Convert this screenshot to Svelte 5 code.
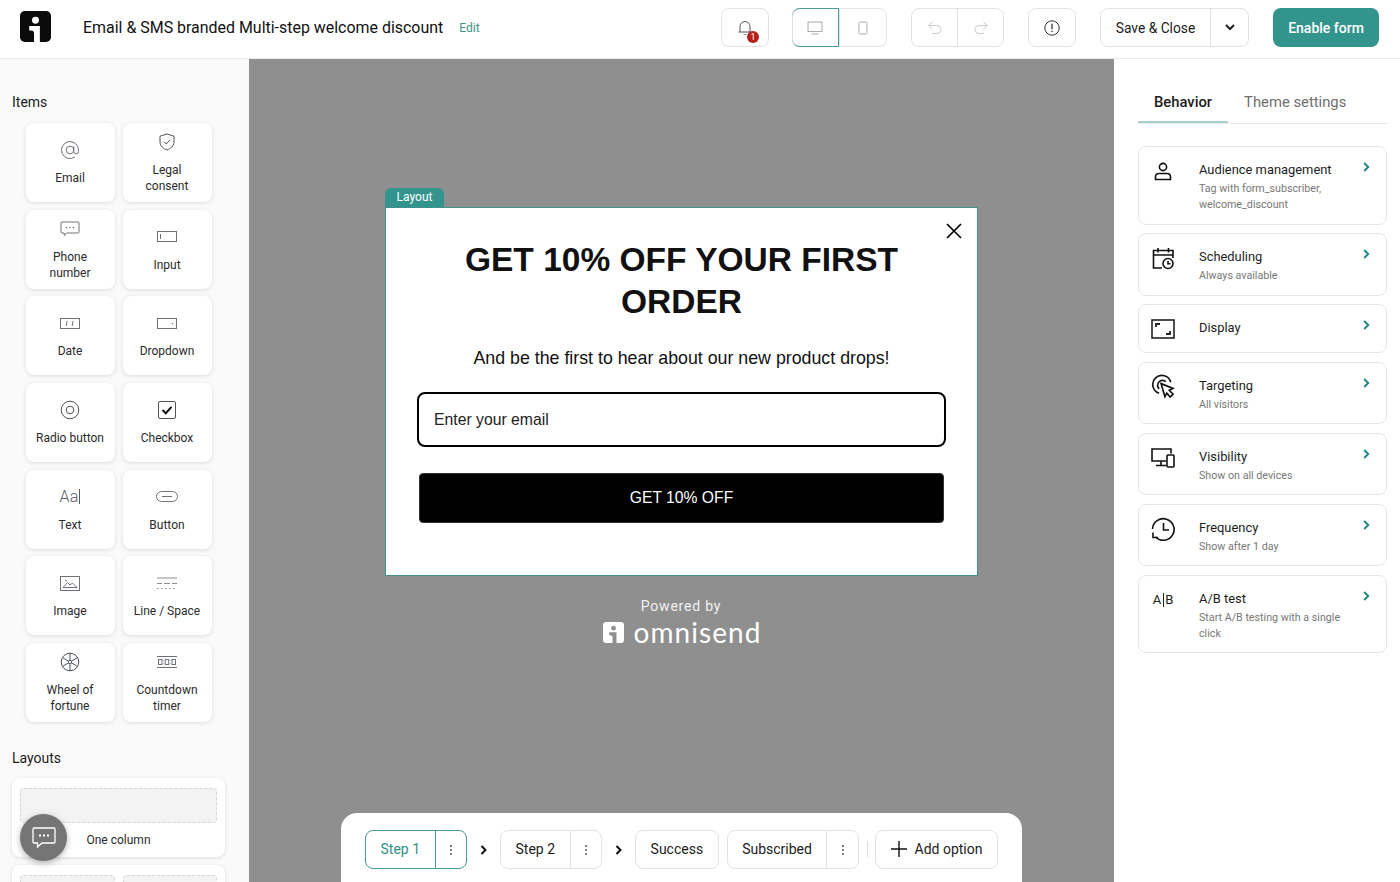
<script>
  const items = [
    { label: 'Email', icon: 'at' },
    { label: 'Legal consent', icon: 'shield' },
    { label: 'Phone number', icon: 'phone' },
    { label: 'Input', icon: 'input' },
    { label: 'Date', icon: 'date' },
    { label: 'Dropdown', icon: 'dropdown' },
    { label: 'Radio button', icon: 'radio' },
    { label: 'Checkbox', icon: 'checkbox' },
    { label: 'Text', icon: 'text' },
    { label: 'Button', icon: 'button' },
    { label: 'Image', icon: 'image' },
    { label: 'Line / Space', icon: 'line' },
    { label: 'Wheel of fortune', icon: 'wheel' },
    { label: 'Countdown timer', icon: 'timer' }
  ];

  const settings = [
    { title: 'Audience management', sub: 'Tag with form_subscriber, welcome_discount', icon: 'person' },
    { title: 'Scheduling', sub: 'Always available', icon: 'calendar' },
    { title: 'Display', sub: '', icon: 'display' },
    { title: 'Targeting', sub: 'All visitors', icon: 'target' },
    { title: 'Visibility', sub: 'Show on all devices', icon: 'devices' },
    { title: 'Frequency', sub: 'Show after 1 day', icon: 'history' },
    { title: 'A/B test', sub: 'Start A/B testing with a single click', icon: 'ab' }
  ];
</script>

<div class="page">
  <!-- top bar -->
  <header class="topbar">
    <svg class="logo" width="31" height="31" viewBox="0 0 32 32">
      <rect width="32" height="32" rx="5" fill="#0b0b0b" />
      <circle cx="16" cy="9.5" r="3.6" fill="#fff" />
      <path d="M9.5 15.5 H20.5 V32 H14.5 V23 Q14.5 20 11.5 20 H9.5 Z" fill="#fff" />
    </svg>
    <h1 class="form-name">Email &amp; SMS branded Multi-step welcome discount</h1>
    <a class="edit" href="#edit">Edit</a>

    <div class="top-actions">
      <div class="btn-box bell">
        <svg width="16" height="18" viewBox="0 0 16 18" fill="none" stroke="#555" stroke-width="1">
          <path d="M3 13 V7.5 a5 5 0 0 1 10 0 V13 M1.5 13 H14.5" />
          <path d="M6.5 15.5 H9.5" stroke="#999" />
        </svg>
        <span class="badge">1</span>
      </div>

      <div class="group">
        <div class="seg seg-active">
          <svg width="16" height="14" viewBox="0 0 16 14" fill="none" stroke="#aaa" stroke-width="1">
            <rect x="1" y="1" width="14" height="9.5" />
            <path d="M4.5 13 H11.5" />
          </svg>
        </div>
        <div class="seg">
          <svg width="10" height="14" viewBox="0 0 10 14" fill="none" stroke="#aaa" stroke-width="1">
            <rect x="1" y="1" width="8" height="12" rx="1.5" />
          </svg>
        </div>
      </div>

      <div class="group history-group">
        <div class="seg">
          <svg width="16" height="14" viewBox="0 0 16 14" fill="none" stroke="#ccc" stroke-width="1">
            <path d="M5.5 1 L1.5 4.5 L5.5 8 M1.5 4.5 H10 a4 4 0 0 1 0 8 H5" />
          </svg>
        </div>
        <div class="seg">
          <svg width="16" height="14" viewBox="0 0 16 14" fill="none" stroke="#ccc" stroke-width="1">
            <path d="M10.5 1 L14.5 4.5 L10.5 8 M14.5 4.5 H6 a4 4 0 0 0 0 8 H11" />
          </svg>
        </div>
      </div>

      <div class="btn-box">
        <svg width="16" height="16" viewBox="0 0 16 16" fill="none" stroke="#333" stroke-width="1">
          <circle cx="8" cy="8" r="7.2" />
          <path d="M8 3.8 V9.2 M8 10.8 V12" stroke-width="1.3" />
        </svg>
      </div>

      <div class="group">
        <div class="seg save-label">Save &amp; Close</div>
        <div class="seg save-caret">
          <svg width="10" height="7" viewBox="0 0 10 7" fill="none" stroke="#222" stroke-width="2">
            <path d="M1 1 L5 5 L9 1" />
          </svg>
        </div>
      </div>

      <button class="enable">Enable form</button>
    </div>
  </header>

  <div class="body">
    <!-- left sidebar -->
    <aside class="left">
      <h2 class="side-title">Items</h2>
      <div class="item-grid">
        {#each items as item}
          <div class="item">
            <div class="item-icon">
              {#if item.icon === 'at'}
                <svg width="20" height="20" viewBox="0 0 20 20" fill="none" stroke="#6f7378" stroke-width="1">
                  <circle cx="10" cy="10" r="3.8" />
                  <path d="M13.8 6.2 V11.5 a2.2 2.2 0 0 0 4.7 0 V10 a8.5 8.5 0 1 0 -3.6 7" />
                </svg>
              {:else if item.icon === 'shield'}
                <svg width="16" height="18" viewBox="0 0 16 18" fill="none" stroke="#4d5358" stroke-width="1">
                  <path d="M8 1 L15 3.2 V9 C15 13 11.5 15.8 8 17 C4.5 15.8 1 13 1 9 V3.2 Z" />
                  <path d="M5 8.8 L7.2 11 L11 7" />
                </svg>
              {:else if item.icon === 'phone'}
                <svg width="20" height="16" viewBox="0 0 20 16" fill="none" stroke="#6f7378" stroke-width="1">
                  <path d="M2 1 H18 a1 1 0 0 1 1 1 V11 a1 1 0 0 1 -1 1 H6.5 L4.5 14.5 L4 12 H2 a1 1 0 0 1 -1 -1 V2 a1 1 0 0 1 1 -1 Z" />
                  <path d="M6 6.5 H7.2 M9.4 6.5 H10.6 M12.8 6.5 H14" stroke="#4d5358" />
                </svg>
              {:else if item.icon === 'input'}
                <svg width="20" height="11" viewBox="0 0 20 11" fill="none" stroke="#6f7378" stroke-width="1">
                  <rect x="0.5" y="0.5" width="19" height="10" />
                  <path d="M3.5 3 V8" />
                </svg>
              {:else if item.icon === 'date'}
                <svg width="20" height="11" viewBox="0 0 20 11" fill="none" stroke="#6f7378" stroke-width="1">
                  <rect x="0.5" y="0.5" width="19" height="10" />
                  <path d="M7 3 L6.2 8 M13 3 L12.2 8" />
                </svg>
              {:else if item.icon === 'dropdown'}
                <svg width="20" height="11" viewBox="0 0 20 11" fill="none" stroke="#6f7378" stroke-width="1">
                  <rect x="0.5" y="0.5" width="19" height="10" />
                  <path d="M14.5 5 H16.5 L15.5 6.5 Z" fill="#6f7378" stroke="none" />
                </svg>
              {:else if item.icon === 'radio'}
                <svg width="20" height="20" viewBox="0 0 20 20" fill="none" stroke="#4d5358" stroke-width="1">
                  <circle cx="10" cy="10" r="8.8" />
                  <circle cx="10" cy="10" r="3.8" />
                </svg>
              {:else if item.icon === 'checkbox'}
                <svg width="18" height="18" viewBox="0 0 18 18" fill="none">
                  <rect x="0.5" y="0.5" width="17" height="17" rx="1.5" stroke="#4d5358" />
                  <path d="M4.5 9 L7.8 12.2 L13.5 5.8" stroke="#111" stroke-width="2" />
                </svg>
              {:else if item.icon === 'text'}
                <span class="aa">Aa<i></i></span>
              {:else if item.icon === 'button'}
                <svg width="22" height="11" viewBox="0 0 22 11" fill="none" stroke="#6f7378" stroke-width="1">
                  <rect x="0.5" y="0.5" width="21" height="10" rx="5" />
                  <path d="M6 5.5 H16" />
                </svg>
              {:else if item.icon === 'image'}
                <svg width="20" height="15" viewBox="0 0 20 15" fill="none" stroke="#6f7378" stroke-width="1">
                  <rect x="0.5" y="0.5" width="19" height="14" />
                  <path d="M3 11.5 L7.5 6.5 L10 9 L12.5 7 L17 11.5 Z" />
                  <circle cx="6" cy="4.5" r="0.8" fill="#6f7378" stroke="none" />
                </svg>
              {:else if item.icon === 'line'}
                <svg width="20" height="13" viewBox="0 0 20 13" fill="none" stroke="#8a8e92" stroke-width="1">
                  <path d="M0 1 H20" />
                  <path d="M0 6.5 H5 M7 6.5 H13 M15 6.5 H20" />
                  <path d="M0 11.5 H20" stroke-dasharray="1.5 2.5" />
                </svg>
              {:else if item.icon === 'wheel'}
                <svg width="20" height="20" viewBox="0 0 20 20" fill="none" stroke="#4d5358" stroke-width="1">
                  <circle cx="10" cy="10" r="8.8" />
                  <circle cx="10" cy="10" r="1.7" />
                  <path d="M10 1.2 V8.3 M10 11.7 V18.8 M2.4 5.6 L8.5 9.1 M11.5 10.9 L17.6 14.4 M2.4 14.4 L8.5 10.9 M11.5 9.1 L17.6 5.6" />
                </svg>
              {:else if item.icon === 'timer'}
                <svg width="20" height="12" viewBox="0 0 20 12" fill="none" stroke="#6f7378" stroke-width="1">
                  <path d="M0 0.5 H20 M0 11.5 H20" />
                  <rect x="1.5" y="3.5" width="3.5" height="5" />
                  <rect x="8.2" y="3.5" width="3.5" height="5" />
                  <rect x="15" y="3.5" width="3.5" height="5" />
                  <path d="M6.6 4.5 V5 M6.6 7 V7.5 M13.4 4.5 V5 M13.4 7 V7.5" />
                </svg>
              {/if}
            </div>
            <div class="item-label">{item.label}</div>
          </div>
        {/each}
      </div>

      <h2 class="side-title layouts">Layouts</h2>
      <div class="layout-card">
        <div class="placeholder"></div>
        <div class="layout-label">One column</div>
      </div>
      <div class="layout-card two">
        <div class="placeholder"></div>
        <div class="placeholder"></div>
      </div>

      <div class="chat">
        <svg width="24" height="22" viewBox="0 0 24 22" fill="none" stroke="#fff" stroke-width="1.3">
          <path d="M2 1 H22 a1 1 0 0 1 1 1 V15 a1 1 0 0 1 -1 1 H10 L5.5 20 V16 H2 a1 1 0 0 1 -1 -1 V2 a1 1 0 0 1 1 -1 Z" />
          <path d="M7 8.5 H9 M11 8.5 H13 M15 8.5 H17" stroke-width="2" />
        </svg>
      </div>
    </aside>

    <!-- canvas with the form preview -->
    <main class="canvas">
      <div class="preview">
        <div class="layout-tab">Layout</div>
        <div class="modal">
          <svg class="close" width="18" height="18" viewBox="0 0 18 18" fill="none" stroke="#000" stroke-width="1.7">
            <path d="M2 2 L16 16 M16 2 L2 16" />
          </svg>
          <h2 class="headline">GET 10% OFF YOUR FIRST ORDER</h2>
          <p class="subline">And be the first to hear about our new product drops!</p>
          <div class="email-input">Enter your email</div>
          <div class="cta">GET 10% OFF</div>
        </div>
        <div class="powered">
          <div class="powered-by">Powered by</div>
          <div class="omni">
            <svg width="21" height="21" viewBox="0 0 32 32">
              <rect width="32" height="32" rx="5" fill="#fff" />
              <circle cx="16" cy="9.5" r="3.6" fill="#8f8f8f" />
              <path d="M9.5 15.5 H20.5 V32 H14.5 V23 Q14.5 20 11.5 20 H9.5 Z" fill="#8f8f8f" />
            </svg>
            <span>omnisend</span>
          </div>
        </div>
      </div>

      <div class="steps">
        <div class="group step step-active">
          <div class="seg step-name">Step 1</div>
          <div class="seg dots"><span class="kebab"></span></div>
        </div>
        <svg class="arrow" width="8" height="10" viewBox="0 0 8 10" fill="none" stroke="#111" stroke-width="2"><path d="M1.5 1 L5.5 5 L1.5 9" /></svg>
        <div class="group step">
          <div class="seg step-name">Step 2</div>
          <div class="seg dots"><span class="kebab"></span></div>
        </div>
        <svg class="arrow" width="8" height="10" viewBox="0 0 8 10" fill="none" stroke="#111" stroke-width="2"><path d="M1.5 1 L5.5 5 L1.5 9" /></svg>
        <div class="group step"><div class="seg step-name">Success</div></div>
        <div class="group step">
          <div class="seg step-name">Subscribed</div>
          <div class="seg dots"><span class="kebab"></span></div>
        </div>
        <div class="step-sep"></div>
        <div class="group step add">
          <div class="seg step-name">
            <svg width="16" height="16" viewBox="0 0 16 16" stroke="#111" stroke-width="1.4"><path d="M8 0 V16 M0 8 H16" /></svg>
            Add option
          </div>
        </div>
      </div>
    </main>

    <!-- right panel -->
    <aside class="right">
      <div class="tabs">
        <div class="tab tab-active">Behavior</div>
        <div class="tab">Theme settings</div>
      </div>
      <div class="settings">
        {#each settings as s}
          <div class="setting">
            <div class="setting-icon">
              {#if s.icon === 'person'}
                <svg width="18" height="19" viewBox="0 0 18 19" fill="none" stroke="#111" stroke-width="1.6">
                  <circle cx="9" cy="5" r="3.6" />
                  <path d="M1.5 17.5 V15 Q1.5 11.5 5 11.5 H13 Q16.5 11.5 16.5 15 V17.5 Z" />
                </svg>
              {:else if s.icon === 'calendar'}
                <svg width="23" height="23" viewBox="0 0 23 23" fill="none" stroke="#111" stroke-width="1.6">
                  <path d="M10 21 H1.5 V3.5 H21 V11" />
                  <path d="M1.5 8 H21 M6 1 V5.5 M16.5 1 V5.5" />
                  <circle cx="16" cy="16.5" r="5" />
                  <path d="M16 14 V16.8 H18.5" />
                </svg>
              {:else if s.icon === 'display'}
                <svg width="24" height="20" viewBox="0 0 24 20" fill="none" stroke="#222" stroke-width="1.6">
                  <rect x="1" y="1" width="22" height="18" />
                  <path d="M5 8 V5 H9 M19 12 V15 H15" stroke-width="1.8" />
                </svg>
              {:else if s.icon === 'target'}
                <svg width="25" height="25" viewBox="0 0 25 25" fill="none" stroke="#111" stroke-width="1.7">
                  <path d="M8.5 19.5 A9.5 9.5 0 1 1 20.5 8" />
                  <path d="M8.5 15 A5 5 0 1 1 15.5 7.5" />
                  <path d="M10.5 9.5 L23 14.5 L19 16.5 L23 20.5 L20 23.5 L16.5 19.5 L14.5 23 Z" fill="#fff" />
                </svg>
              {:else if s.icon === 'devices'}
                <svg width="24" height="20" viewBox="0 0 24 20" fill="none" stroke="#111" stroke-width="1.6">
                  <path d="M15 13 H1 V1 H20 V5.5" />
                  <path d="M10 13 V17 M5 17.5 H15" />
                  <rect x="16" y="7" width="7" height="12" rx="1" />
                </svg>
              {:else if s.icon === 'history'}
                <svg width="24" height="24" viewBox="0 0 24 24" fill="none" stroke="#111" stroke-width="1.6">
                  <path d="M1.5 12 A10.8 10.8 0 1 1 4.5 20" />
                  <path d="M12.5 6 V13 H18" />
                  <path d="M2 15.5 V20.5 H7" />
                </svg>
              {:else if s.icon === 'ab'}
                <span class="ab-icon">A<i></i>B</span>
              {/if}
            </div>
            <div class="setting-text">
              <div class="setting-title">{s.title}</div>
              {#if s.sub}<div class="setting-sub">{s.sub}</div>{/if}
            </div>
            <svg class="chev" width="7" height="10" viewBox="0 0 7 10" fill="none" stroke="#1f8a84" stroke-width="2"><path d="M1.2 1 L5.2 5 L1.2 9" /></svg>
          </div>
        {/each}
      </div>
    </aside>
  </div>
</div>

<style>
  :global(body) { margin: 0; background: #fff; }

  .page {
    width: 1400px;
    height: 882px;
    display: flex;
    flex-direction: column;
    overflow: hidden;
    font-family: Roboto, sans-serif;
    color: #1c1c1c;
  }

  /* Top bar */
  .topbar {
    height: 55px;
    flex: none;
    display: flex;
    align-items: center;
    padding: 0 21px 3px 20px;
    border-bottom: 1px solid #e9e9e9;
    box-sizing: content-box;
  }
  .logo { flex: none; margin-top: -3px; }
  .form-name {
    margin: 0 0 0 32px;
    font-size: 15.95px;
    font-weight: 400;
    color: #111;
    white-space: nowrap;
  }
  .edit {
    margin-left: 16px;
    font-size: 12px;
    color: #3e938d;
    text-decoration: none;
  }
  .top-actions {
    margin-left: auto;
    display: flex;
    align-items: center;
  }

  .btn-box {
    position: relative;
    width: 46px;
    height: 37px;
    margin-left: 24px;
    border: 1px solid #e3e3e3;
    border-radius: 8px;
    display: flex;
    align-items: center;
    justify-content: center;
  }
  .bell { margin-right: -1px; }
  .bell svg { margin-right: 1px; }
  .badge {
    position: absolute;
    left: 25px;
    top: 22px;
    width: 12px;
    height: 12px;
    border-radius: 50%;
    background: #b5201c;
    color: #fff;
    font-size: 9px;
    line-height: 12px;
    text-align: center;
  }

  .group {
    display: flex;
    height: 37px;
    border: 1px solid #e3e3e3;
    border-radius: 8px;
    margin-left: 24px;
  }
  .seg {
    display: flex;
    align-items: center;
    justify-content: center;
    width: 46px;
    border-left: 1px solid #e3e3e3;
  }
  .seg:first-child { border-left: 0; }
  .seg-active {
    border: 1px solid #4b9a95;
    border-radius: 8px 0 0 8px;
    margin: -1px 0 -1px -1px;
  }
  .history-group .seg { width: 45px; }
  .save-label { width: 109px; font-size: 13.8px; color: #1c1c1c; }
  .save-caret { width: 37px; }
  .enable {
    margin-left: 24px;
    width: 106px;
    height: 39px;
    background: #33948e;
    border: 0;
    border-radius: 8px;
    color: #fff;
    font: 500 14px Roboto, sans-serif;
  }

  .body { flex: 1; display: flex; min-height: 0; }

  /* Left sidebar */
  .left {
    position: relative;
    width: 249px;
    flex: none;
    box-sizing: border-box;
    background: #fafafa;
    padding: 35px 12px 0;
    overflow: hidden;
  }
  .side-title {
    margin: 0;
    font-size: 14px;
    font-weight: 400;
    line-height: 16px;
    color: #1c1c1c;
  }
  .item-grid {
    display: grid;
    grid-template-columns: 89px 89px;
    grid-auto-rows: 79px;
    column-gap: 8px;
    row-gap: 7.67px;
    margin: 13px 0 0 13.5px;
  }
  .item {
    box-sizing: border-box;
    padding-bottom: 1px;
    background: #fff;
    border-radius: 8px;
    box-shadow: 0 1px 4px rgba(0, 0, 0, 0.12);
    display: flex;
    flex-direction: column;
    align-items: center;
    justify-content: center;
    text-align: center;
    color: #333;
  }
  .item-icon {
    height: 24px;
    display: flex;
    align-items: center;
    justify-content: center;
    margin-bottom: 8px;
  }
  .item-label {
    width: 70px;
    font-size: 12px;
    line-height: 16px;
    color: #2b2b2b;
  }
  .aa {
    display: flex;
    align-items: center;
    font-size: 16px;
    font-weight: 300;
    color: #555b60;
    letter-spacing: 0.2px;
  }
  .aa i {
    display: block;
    width: 1px;
    height: 15px;
    margin-left: 1px;
    background: #555b60;
  }
  .layouts { margin-top: 28px; }
  .layout-card {
    width: 213px;
    margin-top: 12px;
    height: 79px;
    box-sizing: border-box;
    background: #fff;
    border-radius: 8px;
    box-shadow: 0 1px 4px rgba(0, 0, 0, 0.12);
    padding: 10px 8px 0;
  }
  .layout-card.two { margin-top: 8px; display: flex; gap: 8px; }
  .placeholder {
    flex: 1;
    height: 35px;
    box-sizing: border-box;
    background: #f3f3f3;
    border: 1px dashed #d6d6d6;
    border-radius: 4px;
  }
  .layout-label {
    margin-top: 9px;
    text-align: center;
    font-size: 12px;
    line-height: 16px;
    color: #2b2b2b;
  }
  .chat {
    position: absolute;
    left: 20px;
    top: 755px;
    width: 47px;
    height: 47px;
    border-radius: 50%;
    background: #757575;
    box-shadow: 0 2px 6px rgba(0, 0, 0, 0.3);
    display: flex;
    align-items: center;
    justify-content: center;
  }

  /* Canvas */
  .canvas {
    width: 865px;
    flex: none;
    background: #8f8f8f;
    display: flex;
    flex-direction: column;
    align-items: center;
    overflow: hidden;
  }
  .preview {
    width: 593px;
    padding-top: 129px;
  }
  .layout-tab {
    width: 59px;
    height: 19px;
    background: #33948e;
    border-radius: 6px 6px 0 0;
    color: #fff;
    font-size: 12px;
    line-height: 19px;
    text-align: center;
  }
  .modal {
    position: relative;
    height: 369px;
    box-sizing: border-box;
    background: #fff;
    border: 1px solid #3e938d;
    padding: 31px 31px 0;
    font-family: "Liberation Sans", Arial, sans-serif;
    color: #000;
  }
  .close { position: absolute; right: 14px; top: 14px; }
  .headline {
    margin: 0 auto;
    width: 500px;
    font-size: 33.5px;
    line-height: 42px;
    font-weight: 700;
    text-align: center;
    color: #111;
  }
  .subline {
    margin: 23px 0 0;
    font-size: 17.8px;
    line-height: 24px;
    text-align: center;
    color: #111;
  }
  .email-input {
    margin-top: 22px;
    height: 55px;
    box-sizing: border-box;
    border: 2px solid #000;
    border-radius: 8px;
    padding: 0 15px;
    display: flex;
    align-items: center;
    font-size: 15.75px;
    color: #222;
  }
  .cta {
    margin: 26px 2px 0 2px;
    height: 50px;
    background: #000;
    border: 1px solid #333;
    box-sizing: border-box;
    border-radius: 4px;
    color: #fff;
    font-size: 15.7px;
    display: flex;
    align-items: center;
    justify-content: center;
  }
  .powered {
    margin-top: 22px;
    text-align: center;
    color: #f1f1f1;
  }
  .powered-by { font-size: 14px; line-height: 16px; letter-spacing: 0.8px; margin-right: 1px; }
  .omni {
    display: flex;
    align-items: center;
    justify-content: center;
    gap: 10px;
    margin: 2px 0 0 1px;
    font-family: Lato, sans-serif;
    font-size: 28px;
    line-height: 32px;
    font-weight: 400;
    letter-spacing: 1.05px;
    color: #fff;
  }

  /* Step bar */
  .steps {
    margin-top: auto;
    width: 681px;
    height: 69px;
    flex: none;
    box-sizing: border-box;
    background: #fff;
    border-radius: 16px 16px 0 0;
    padding: 17px 24px 0;
    display: flex;
    align-items: flex-start;
    white-space: nowrap;
  }
  .step { margin-left: 0; }
  .step-active { border-color: #4b9a95; }
  .step-active .seg { border-color: #4b9a95; }
  .step-active .step-name { color: #2f8f88; }
  .step-name {
    width: auto;
    padding: 0 14.5px 1px;
    font-size: 14px;
    gap: 8px;
    color: #1c1c1c;
  }
  .dots { width: 30.5px; }
  .kebab {
    width: 2px;
    height: 2px;
    border-radius: 50%;
    background: #555;
    box-shadow: 0 -4px 0 #555, 0 4px 0 #555;
  }
  .arrow { margin: 15px 12px 0 13px; flex: none; }
  .group.step + .group.step { margin-left: 8px; }
  .step-sep {
    width: 2px;
    height: 16px;
    margin: 11px 8px 0 8px;
    background: #ddd;
  }
  .group.add { margin-left: 0; }

  /* Right panel */
  .right {
    flex: 1;
    min-width: 0;
    background: #fff;
    padding: 24px 13px 0 24px;
  }
  .tabs {
    display: flex;
    height: 40px;
    border-bottom: 1px solid #eaeaea;
    margin-bottom: 22px;
  }
  .tab {
    font-size: 14.8px;
    line-height: 39px;
    padding: 0 16px;
    color: #6f6f6f;
    height: 39px;
  }
  .tab-active {
    font-weight: 500;
    color: #1c1c1c;
    border-bottom: 2px solid #a9cfcb;
    height: 38px;
  }
  .settings { display: flex; flex-direction: column; gap: 8.5px; }
  .setting {
    position: relative;
    display: flex;
    align-items: flex-start;
    border: 1px solid #e6e6e6;
    border-radius: 8px;
    padding: 13px 40px 14px 12px;
  }
  .setting-icon {
    width: 24px;
    height: 24px;
    flex: none;
    display: flex;
    align-items: center;
    justify-content: center;
    margin: -1px 24px -6px 0;
  }
  .setting-title { font-size: 12.9px; line-height: 20px; color: #1c1c1c; }
  .setting-sub {
    font-size: 10.7px;
    line-height: 16px;
    margin: 1px -8px -3.5px 0;
    color: #777;
  }
  .chev { position: absolute; right: 16px; top: 15px; }
  .ab-icon {
    display: flex;
    align-items: center;
    font-size: 13px;
    color: #222;
  }
  .ab-icon i {
    display: block;
    width: 1px;
    height: 14px;
    margin: 0 1.5px;
    background: #222;
  }
</style>
